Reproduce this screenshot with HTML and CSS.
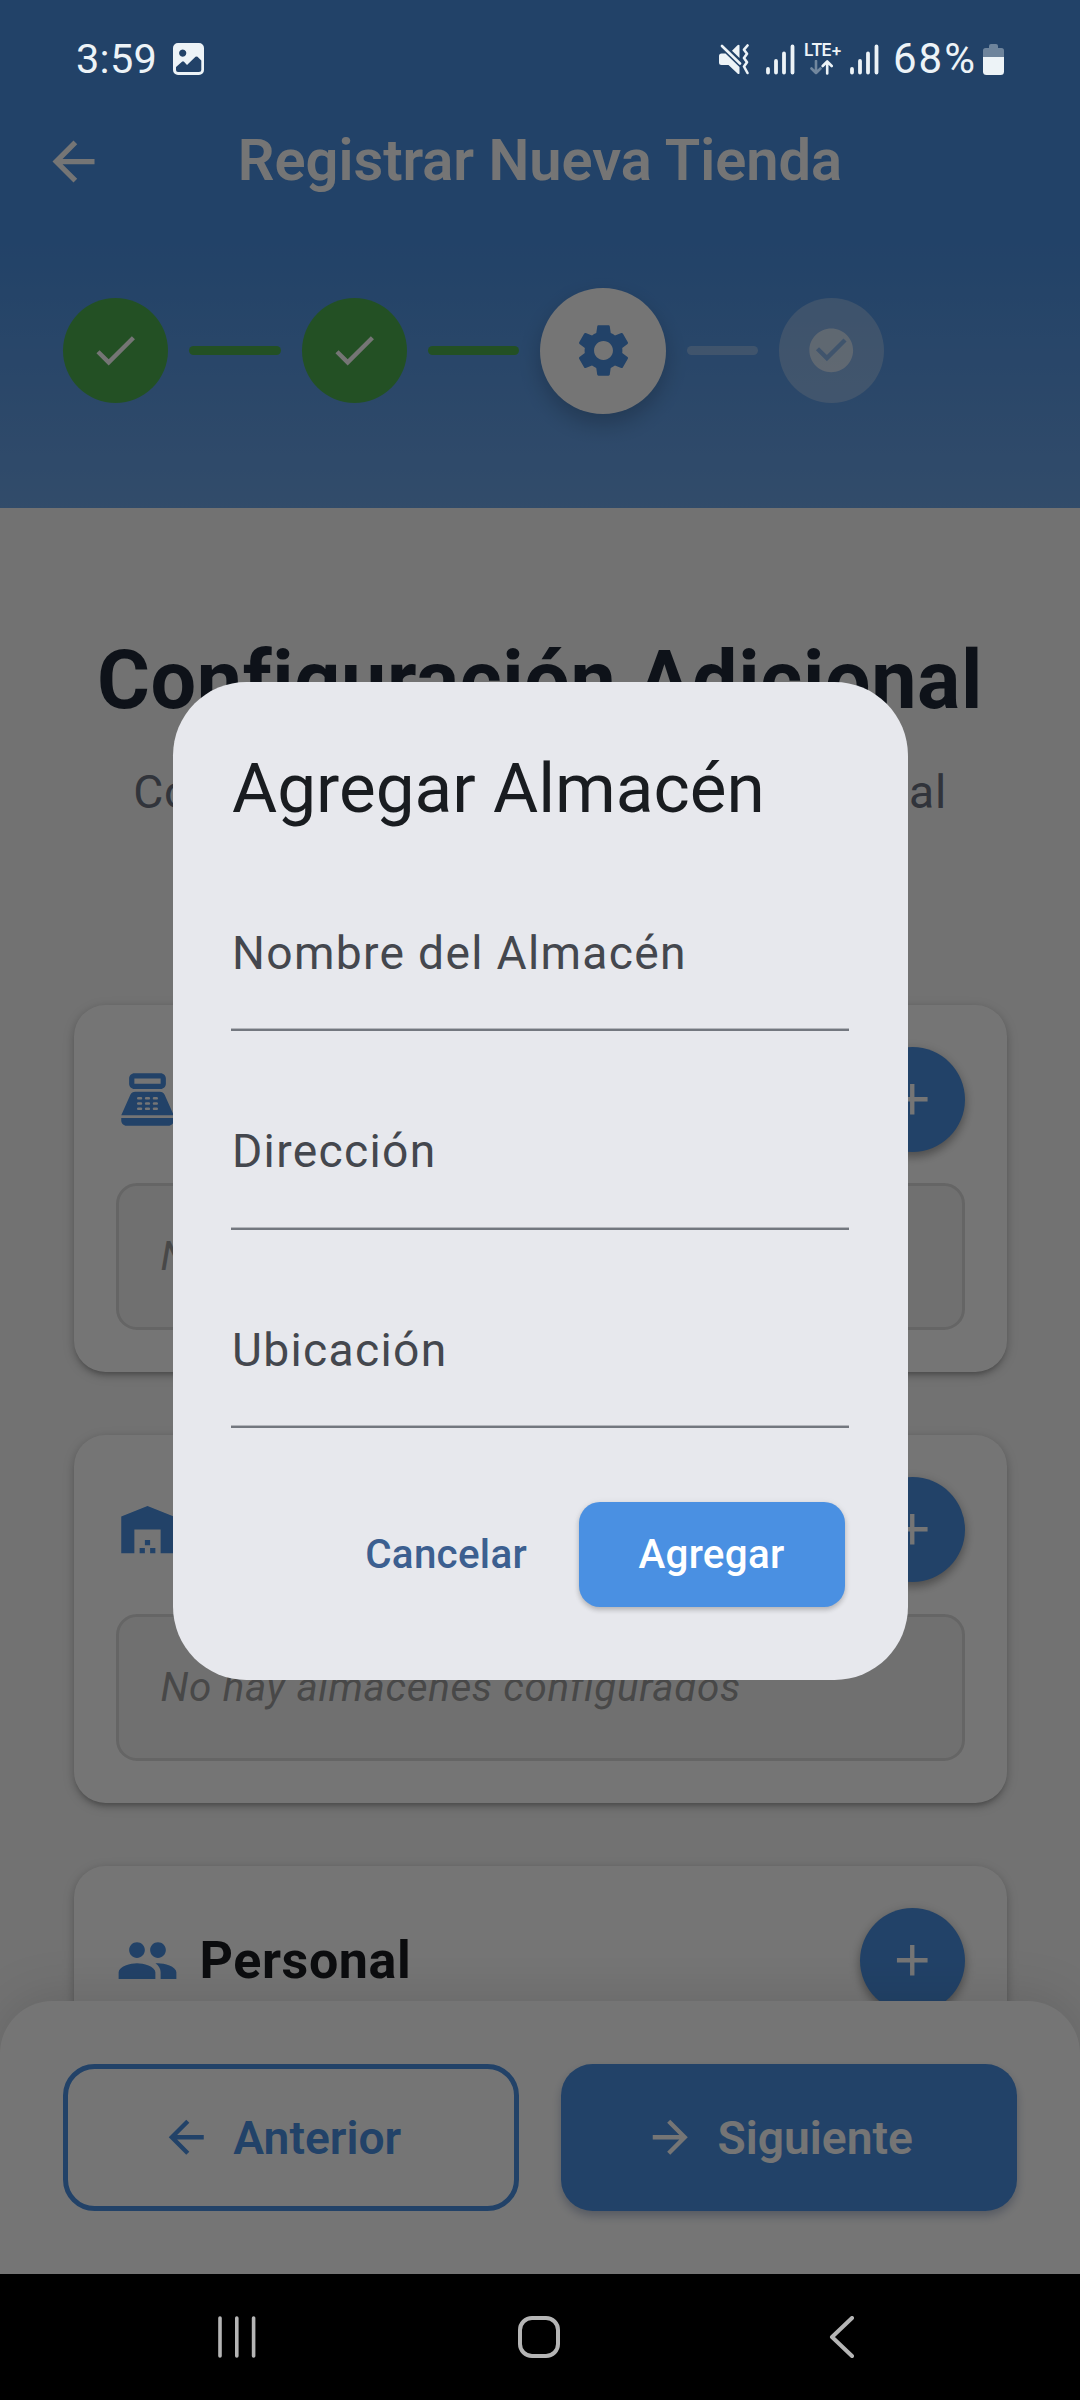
FILE: index.html
```html
<!DOCTYPE html>
<html lang="es">
<head>
<meta charset="utf-8">
<title>Registrar Nueva Tienda</title>
<link rel="stylesheet" href="styles.css">
</head>
<body>
<div class="screen">
  <div class="status">
    <div class="status-left">
      <span class="clock">3:59</span>
      <svg class="ic-image" viewBox="0 0 31 32"><path fill="currentColor" fill-rule="evenodd" d="M5 0h21a5 5 0 0 1 5 5v22a5 5 0 0 1-5 5H5a5 5 0 0 1-5-5V5a5 5 0 0 1 5-5zM9.700 6.500a3.600 3.600 0 1 0 .01 0zM3 24v3q0 2 2 2h21q2.300 0 2.300-2v-9.500l-3.800-3.700q-1-.8-2 0L14 22l-3-3.300q-1-.9-2 0z"/></svg>
    </div>
    <div class="status-right">
      <svg class="ic-mute" viewBox="0 0 30 31"><g fill="currentColor"><path d="M2.500 9.500h4L20.500 23v6.500q-1 1-2 0L9.500 21h-7Q0 21 0 18.500V12q0-2.500 2.500-2.500z"/><path d="M20.500 1.200V14L13 6.700l5.500-5.500q1.200-1 2 0z"/></g><path d="M3 2l18 17.500M28.500 1.500l-3.500 4.200 3 4-3 4.300 3 4.200-3 4.300 3.500 6.500" fill="none" stroke="currentColor" stroke-width="2.600" stroke-linecap="round" stroke-linejoin="round"/></svg>
      <svg class="ic-signal" viewBox="0 0 29 31"><path d="M2 25v3.500M10 17v11.500M18 9.500v19M26.500 2.500v26" stroke="currentColor" stroke-width="3.800" stroke-linecap="round"/></svg>
      <div class="lte"><span>LTE+</span><svg viewBox="0 0 24 15"><path d="M6 1v12M1.500 8.500L6 13l4.500-4.500" fill="none" stroke="#72879e" stroke-width="2.600" stroke-linecap="round" stroke-linejoin="round"/><path d="M17.200 13.500V2M12.700 6L17.200 1.500 21.700 6" fill="none" stroke="currentColor" stroke-width="2.600" stroke-linecap="round" stroke-linejoin="round"/></svg></div>
      <svg class="ic-signal second" viewBox="0 0 29 31"><path d="M2 25v3.500M10 17v11.500M18 9.500v19M26.500 2.500v26" stroke="currentColor" stroke-width="3.800" stroke-linecap="round"/></svg>
      <span class="battery-text">68%</span>
      <svg class="ic-battery" viewBox="0 0 21 31"><path fill="#6e849c" d="M8 0h5q2 0 2 2v2h3.500Q21 4 21 6.500V14H0V6.500Q0 4 2.500 4H6V2q0-2 2-2z"/><path fill="currentColor" d="M0 13h21v14.500q0 3.500-3.500 3.500h-14Q0 31 0 27.500z"/></svg>
    </div>
  </div>

  <header class="appbar">
    <svg class="back" viewBox="0 0 24 24"><path fill="currentColor" d="M20 11H7.830l5.590-5.590L12 4l-8 8 8 8 1.410-1.410L7.830 13H20v-2z"/></svg>
    <h1>Registrar Nueva Tienda</h1>
  </header>

  <div class="stepper">
    <div class="step"><div class="dot done"><svg viewBox="0 0 24 24"><path fill="currentColor" d="M9 16.170L4.830 12l-1.420 1.410L9 19 21 7l-1.410-1.410z"/></svg></div><div class="line done"></div></div>
    <div class="step"><div class="dot done"><svg viewBox="0 0 24 24"><path fill="currentColor" d="M9 16.170L4.830 12l-1.420 1.410L9 19 21 7l-1.410-1.410z"/></svg></div><div class="line done"></div></div>
    <div class="step"><div class="dot active"><svg viewBox="0 0 24 24"><path fill="currentColor" d="M19.140 12.940c.04-.3.06-.61.06-.94 0-.32-.02-.64-.07-.94l2.030-1.580c.18-.14.23-.41.12-.61l-1.920-3.320c-.12-.22-.37-.29-.59-.22l-2.390.96c-.5-.38-1.030-.7-1.620-.94l-.36-2.540c-.04-.24-.24-.41-.48-.41h-3.840c-.24 0-.43.17-.47.41l-.36 2.540c-.59.24-1.130.57-1.620.94l-2.390-.96c-.22-.08-.47 0-.59.22L2.740 8.870c-.12.21-.08.47.12.61l2.030 1.580c-.05.3-.09.63-.09.94s.02.64.07.94l-2.030 1.580c-.18.14-.23.41-.12.61l1.920 3.320c.12.22.37.29.59.22l2.390-.96c.5.38 1.030.7 1.620.94l.36 2.540c.05.24.24.41.48.41h3.840c.24 0 .44-.17.47-.41l.36-2.540c.59-.24 1.130-.56 1.620-.94l2.390.96c.22.08.47 0 .59-.22l1.920-3.320c.12-.22.07-.47-.12-.61l-2.010-1.580zM12 15.600c-1.980 0-3.600-1.620-3.600-3.600s1.620-3.600 3.600-3.600 3.600 1.620 3.600 3.600-1.620 3.600-3.600 3.600z"/></svg></div><div class="line"></div></div>
    <div class="step"><div class="dot todo"><svg viewBox="0 0 24 24"><path fill="currentColor" d="M12 2C6.480 2 2 6.480 2 12s4.480 10 10 10 10-4.480 10-10S17.520 2 12 2zm-2 15l-5-5 1.410-1.410L10 14.170l7.590-7.590L19 8l-9 9z"/></svg></div></div>
  </div>

  <main class="content">
    <h2>Configuración Adicional</h2>
    <p class="subtitle">Configura almacenes, cajas y personal</p>

    <section class="card">
      <div class="card-head">
        <svg class="card-icon" viewBox="0 0 24 24"><path fill="currentColor" fill-rule="evenodd" d="M17 2H7c-1.100 0-2 .9-2 2v2c0 1.100.9 2 2 2h10c1.100 0 2-.9 2-2V4c0-1.100-.9-2-2-2zm0 4H7V4h10v2zm3 16H4c-1.100 0-2-.9-2-2v-1h20v1c0 1.100-.9 2-2 2zM18.530 10.190C18.210 9.470 17.490 9 16.700 9H7.300c-.79 0-1.510.47-1.830 1.190L2 18h20l-3.470-7.810zM9.500 16h-1c-.28 0-.5-.22-.5-.5s.22-.5.5-.5h1c.28 0 .5.22.5.5s-.22.5-.5.5zm0-2h-1c-.28 0-.5-.22-.5-.5s.22-.5.5-.5h1c.28 0 .5.22.5.5s-.22.5-.5.5zm0-2h-1c-.28 0-.5-.22-.5-.5s.22-.5.5-.5h1c.28 0 .5.22.5.5s-.22.5-.5.5zm3 4h-1c-.28 0-.5-.22-.5-.5s.22-.5.5-.5h1c.28 0 .5.22.5.5s-.22.5-.5.5zm0-2h-1c-.28 0-.5-.22-.5-.5s.22-.5.5-.5h1c.28 0 .5.22.5.5s-.22.5-.5.5zm0-2h-1c-.28 0-.5-.22-.5-.5s.22-.5.5-.5h1c.28 0 .5.22.5.5s-.22.5-.5.5zm3 4h-1c-.28 0-.5-.22-.5-.5s.22-.5.5-.5h1c.28 0 .5.22.5.5s-.22.5-.5.5zm0-2h-1c-.28 0-.5-.22-.5-.5s.22-.5.5-.5h1c.28 0 .5.22.5.5s-.22.5-.5.5zm0-2h-1c-.28 0-.5-.22-.5-.5s.22-.5.5-.5h1c.28 0 .5.22.5.5s-.22.5-.5.5z"/></svg>
        <h3>Cajas</h3>
        <button class="fab"><svg viewBox="0 0 24 24"><path fill="currentColor" d="M19 13h-6v6h-2v-6H5v-2h6V5h2v6h6v2z"/></svg></button>
      </div>
      <div class="empty">No hay cajas configuradas</div>
    </section>

    <section class="card">
      <div class="card-head">
        <svg class="card-icon" viewBox="0 0 24 24"><path fill="currentColor" d="M22 21V7L12 3 2 7v14h5v-9h10v9h5zm-11-2H9v2h2v-2zm2-3h-2v2h2v-2zm2 3h-2v2h2v-2z"/></svg>
        <h3>Almacenes</h3>
        <button class="fab"><svg viewBox="0 0 24 24"><path fill="currentColor" d="M19 13h-6v6h-2v-6H5v-2h6V5h2v6h6v2z"/></svg></button>
      </div>
      <div class="empty">No hay almacenes configurados</div>
    </section>

    <section class="card">
      <div class="card-head">
        <svg class="card-icon" viewBox="0 0 24 24"><path fill="currentColor" d="M16 11c1.660 0 2.990-1.340 2.990-3S17.660 5 16 5c-1.660 0-3 1.340-3 3s1.340 3 3 3zm-8 0c1.660 0 2.990-1.340 2.990-3S9.660 5 8 5C6.340 5 5 6.340 5 8s1.340 3 3 3zm0 2c-2.330 0-7 1.170-7 3.500V19h14v-2.500c0-2.330-4.670-3.500-7-3.500zm8 0c-.29 0-.62.020-.97.050 1.160.84 1.970 1.970 1.970 3.450V19h6v-2.500c0-2.330-4.670-3.500-7-3.500z"/></svg>
        <h3>Personal</h3>
        <button class="fab"><svg viewBox="0 0 24 24"><path fill="currentColor" d="M19 13h-6v6h-2v-6H5v-2h6V5h2v6h6v2z"/></svg></button>
      </div>
    </section>
  </main>

  <footer class="actions">
    <button class="btn outline"><svg viewBox="0 0 24 24"><path fill="currentColor" d="M20 11H7.830l5.590-5.590L12 4l-8 8 8 8 1.410-1.410L7.830 13H20v-2z"/></svg>Anterior</button>
    <button class="btn solid"><svg viewBox="0 0 24 24"><path fill="currentColor" d="M12 4l-1.410 1.410L16.170 11H4v2h12.170l-5.580 5.590L12 20l8-8z"/></svg>Siguiente</button>
  </footer>

  <nav class="navbar">
    <svg viewBox="0 0 42 42"><path d="M4 2v38M20.800 2v38M37.600 2v38" stroke="currentColor" stroke-width="3.600" stroke-linecap="round"/></svg>
    <svg viewBox="0 0 42 42"><rect x="2" y="2" width="38" height="38" rx="12" fill="none" stroke="currentColor" stroke-width="4"/></svg>
    <svg viewBox="0 0 42 42"><path d="M32 2L12 21l20 19" fill="none" stroke="currentColor" stroke-width="4" stroke-linecap="round" stroke-linejoin="round"/></svg>
  </nav>

  <div class="scrim">
    <div class="dialog">
      <h2>Agregar Almacén</h2>
      <div class="field">Nombre del Almacén</div>
      <div class="field">Dirección</div>
      <div class="field">Ubicación</div>
      <div class="dialog-actions">
        <button class="cancel">Cancelar</button>
        <button class="confirm">Agregar</button>
      </div>
    </div>
  </div>
</div>
</body>
</html>
```
FILE: styles.css
```css
* { box-sizing: border-box; margin: 0; padding: 0; }
body { background: #000; }
button { border: 0; background: none; font: inherit; }
svg { display: block; flex: none; }

.screen {
  position: relative;
  width: 1080px;
  height: 2400px;
  overflow: hidden;
  display: flex;
  flex-direction: column;
  background: #f8f8f8;
  font-family: Roboto, sans-serif;
}

/* Status bar stays bright above the scrim */
.status {
  position: relative;
  z-index: 3;
  flex: none;
  height: 87px;
  padding: 31px 76px 0;
  display: flex;
  justify-content: space-between;
  color: #edf3f7;
}
.status::before {
  content: "";
  position: absolute;
  inset: 0;
  z-index: -1;
  background: #224268;
}
.status-left, .status-right { display: flex; align-items: center; height: 56px; }
.clock { font-size: 41.500px; line-height: 56px; width: 79px; letter-spacing: .3px; }
.ic-image { width: 31px; height: 32px; margin-left: 18px; }
.ic-mute { width: 30px; height: 31px; margin-right: 17px; }
.ic-signal { width: 29px; height: 31px; margin-right: 9px; }
.ic-signal.second { margin-right: 14px; }
.lte { width: 38px; margin-right: 8px; display: flex; flex-direction: column; align-items: flex-start; gap: 3px; }
.lte span { font: 600 17px/14px Inter, sans-serif; letter-spacing: -0.9px; }
.lte svg { width: 24px; height: 15px; margin-left: 6px; }
.battery-text { font-size: 42px; line-height: 56px; width: 85px; margin-right: 5px; letter-spacing: 2px; }
.ic-battery { width: 21px; height: 31px; }

.appbar {
  flex: none;
  height: 148px;
  padding: 0 42px;
  display: grid;
  grid-template-columns: 63px 1fr 63px;
  align-items: center;
  background: #4a90e2;
  color: #fff;
}
.back { width: 63px; height: 63px; }
.appbar h1 { text-align: center; font-size: 57.750px; font-weight: 600; line-height: 70px; padding-bottom: 2px; }

.stepper {
  flex: none;
  height: 273px;
  padding: 42px 63px 0;
  display: grid;
  grid-template-columns: repeat(4, 1fr);
  align-items: start;
  background: linear-gradient(#4a90e2, #6da5e7);
}
.step { display: flex; align-items: center; height: 147px; }
.dot {
  flex: none;
  width: 105px;
  height: 105px;
  border-radius: 50%;
  display: grid;
  place-items: center;
  color: #fff;
}
.dot svg { width: 52.500px; height: 52.500px; }
.dot.done { background: #4caf50; }
.dot.active { width: 126px; height: 126px; background: #fff; color: #4a90e2; box-shadow: 0 10px 21px rgba(0, 0, 0, .2); }
.dot.active svg { width: 63px; height: 63px; }
.dot.todo { background: rgba(255, 255, 255, .3); color: rgba(255, 255, 255, .6); }
.line { flex: 1; height: 9px; margin: 0 21px; border-radius: 5px; background: rgba(255, 255, 255, .3); }
.line.done { background: #4caf50; }

.content { flex: 1; min-height: 0; overflow: hidden; padding: 125px 73.500px 0; }
.content h2 { text-align: center; white-space: nowrap; font-size: 80.850px; line-height: 95px; font-weight: 700; letter-spacing: .6px; color: #1f2937; margin: 0 -10px; }
.subtitle { margin: 29.500px 0 178px; text-align: center; white-space: nowrap; font-size: 46.200px; line-height: 69px; letter-spacing: .66px; color: #6b7280; }

.card {
  height: 367.500px;
  margin-bottom: 63px;
  padding: 42px;
  border-radius: 31.500px;
  background: #fff;
  box-shadow: 0 5px 5px -3px rgba(0, 0, 0, .2), 0 3px 8px rgba(0, 0, 0, .14), 0 3px 13px rgba(0, 0, 0, .12);
}
.card-head { display: flex; align-items: center; gap: 21px; height: 105px; margin-bottom: 31.500px; }
.card-icon { width: 63px; height: 63px; color: #4a90e2; }
.card h3 { flex: 1; font-size: 52px; line-height: 63px; font-weight: 700; letter-spacing: .6px; color: #1a1c20; }
.fab {
  width: 105px;
  height: 105px;
  border-radius: 50%;
  display: grid;
  place-items: center;
  background: #4a90e2;
  color: #fff;
  box-shadow: 0 5px 8px rgba(0, 0, 0, .25), 0 2px 13px rgba(0, 0, 0, .14);
}
.fab svg { width: 52.500px; height: 52.500px; }
.empty {
  height: 147px;
  padding: 0 42px;
  border: 3px solid #dcdcdc;
  border-radius: 21px;
  background: #f5f5f5;
  color: #9e9e9e;
  font-size: 40.400px;
  line-height: 141px;
  font-style: italic;
  letter-spacing: .66px;
  white-space: nowrap;
}

.actions {
  position: relative;
  flex: none;
  height: 273px;
  padding: 63px;
  margin-top: -53px;
  display: grid;
  grid-template-columns: 1fr 1fr;
  gap: 42px;
  border-radius: 52.500px 52.500px 0 0;
  background: #fff;
  box-shadow: 0 -5px 52px rgba(0, 0, 0, .12);
}
.btn {
  height: 147px;
  border-radius: 31.500px;
  padding: 0 21px 0 0;
  display: flex;
  align-items: center;
  justify-content: center;
  gap: 21px;
  font-size: 46.200px;
  font-weight: 600;
}
.btn svg { width: 52.500px; height: 52.500px; }
.btn.outline { border: 5px solid #4a90e2; color: #4a90e2; }
.btn.solid { background: #4a90e2; color: #fff; box-shadow: 0 5px 10px rgba(30, 60, 120, .3); }

.navbar {
  position: relative;
  z-index: 3;
  flex: none;
  height: 126px;
  padding: 0 218px 0 216px;
  display: flex;
  justify-content: space-between;
  align-items: center;
  background: #000;
  color: #b5b5b5;
}
.navbar svg { width: 42px; height: 42px; }

/* Modal layer */
.scrim {
  position: absolute;
  inset: 0;
  z-index: 2;
  padding-top: 682px;
  display: flex;
  justify-content: center;
  align-items: flex-start;
  background: rgba(0, 0, 0, .54);
}
.dialog {
  width: 735px;
  height: 998px;
  padding: 64.500px 59px 0 58.500px;
  border-radius: 73.500px;
  background: #e7e8ed;
}
.dialog h2 { font-size: 69.300px; line-height: 83px; font-weight: 400; color: #191c20; margin-bottom: 3px; padding-left: 1px; }
.field {
  height: 198.500px;
  padding: 93px 0 0 1px;
  border-bottom: 2px solid #73777f;
  box-shadow: inset 0 -1px #b3b5bb;
  font-size: 46.200px;
  line-height: 54px;
  letter-spacing: 1.310px;
  color: #44474e;
}
.dialog-actions {
  display: flex;
  justify-content: flex-end;
  align-items: center;
  gap: 20px;
  padding: 73.500px 4px 0 0;
}
.dialog-actions button { height: 105px; border-radius: 21px; font-size: 40.400px; font-weight: 500; letter-spacing: .26px; }
.cancel { padding: 0 31.500px; color: #3c5f90; }
.confirm { width: 266px; background: #4a90e2; color: #fff; box-shadow: 0 3px 5px rgba(0, 0, 0, .18), 0 1px 7px rgba(0, 0, 0, .08); }
```
